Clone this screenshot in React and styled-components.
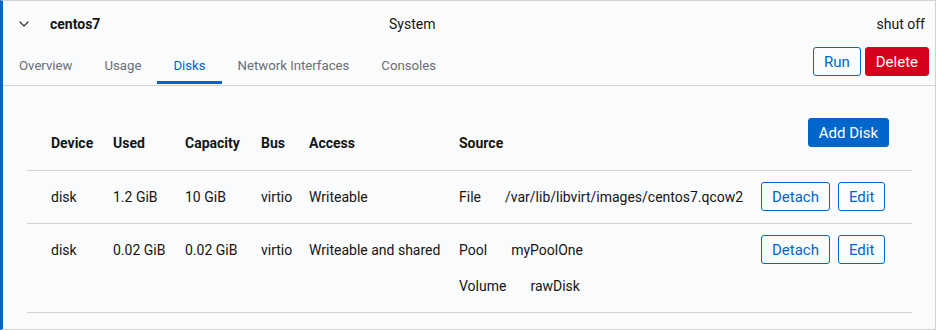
import React from 'react';
import styled, { createGlobalStyle } from 'styled-components';

const GlobalStyle = createGlobalStyle`
  html, body { margin: 0; padding: 0; background: #ffffff; }
  body {
    font-family: Roboto, "Liberation Sans", sans-serif;
    font-size: 14px;
    line-height: 20px;
    color: #151515;
  }
  * { box-sizing: border-box; }
`;

const Card = styled.section`
  width: 936px;
  background: #fafbfc;
  border: 1px solid #d2d2d2;
  border-left: 3px solid #0066cc;
  display: flex;
  flex-direction: column;
`;

const HeaderRow = styled.div`
  display: grid;
  grid-template-columns: 47px 339px 1fr auto;
  align-items: center;
  height: 45px;
  padding-right: 10px;
`;

const Toggle = styled.button`
  border: 0;
  background: transparent;
  padding: 0 0 0 16px;
  height: 45px;
  display: flex;
  align-items: center;
  color: #151515;
  cursor: pointer;
`;

const VmName = styled.span`
  font-weight: 700;
`;

const Meta = styled.span`
  color: #151515;
`;

const TabsRow = styled.div`
  display: flex;
  justify-content: space-between;
  align-items: flex-start;
  padding: 0 6px 1px 0;
  border-bottom: 1px solid #d2d2d2;
`;

const TabList = styled.nav`
  display: flex;
`;

const Tab = styled.button`
  font-family: inherit;
  font-size: 13.2px;
  background: transparent;
  border: 0;
  border-bottom: 3px solid ${p => (p.$active ? '#0066cc' : 'transparent')};
  color: ${p => (p.$active ? '#0066cc' : '#6a6e73')};
  padding: 10px 16px 5px;
  line-height: 20px;
  cursor: pointer;
`;

const ButtonGroup = styled.div`
  display: flex;
  gap: ${p => p.$gap || 8}px;
  margin-top: ${p => p.$top || 0}px;
`;

const Button = styled.button`
  font-family: inherit;
  font-size: 15px;
  height: 29px;
  padding: 0 10px;
  border-radius: 3px;
  display: inline-flex;
  align-items: center;
  cursor: pointer;
  border: 1px solid
    ${p => (p.$variant === 'danger' ? '#d6001c' : '#0066cc')};
  background: ${p =>
    p.$variant === 'primary' ? '#0066cc' : p.$variant === 'danger' ? '#d6001c' : 'transparent'};
  color: ${p => (p.$variant === 'secondary' ? '#0066cc' : '#ffffff')};
`;

const Body = styled.div`
  padding: 16px 23px 16px 24px;
`;

const cols = '86px 72px 76px 48px 150px 302px 1fr';

const HeadRow = styled.div`
  display: grid;
  grid-template-columns: ${cols};
  height: 69px;
  border-bottom: 1px solid #d2d2d2;
`;

const Th = styled.div`
  font-weight: 700;
  align-self: end;
  padding: 0 0 17px ${p => (p.$first ? 24 : 0)}px;
`;

const ThAction = styled.div`
  align-self: start;
  justify-self: end;
  padding: 16px 23px 0 0;
`;

const Row = styled.div`
  display: grid;
  grid-template-columns: ${cols};
  align-items: start;
  border-bottom: 1px solid #d2d2d2;
`;

const Td = styled.div`
  padding: 16px 0 16px ${p => (p.$first ? 24 : 0)}px;
`;

const TdAction = styled.div`
  padding-top: 11px;
`;

const SourceList = styled.div`
  display: flex;
  flex-direction: column;
  gap: 16px;
`;

const SourceItem = styled.div`
  display: flex;
  gap: 24px;
`;

const Chevron = () => (
  <svg width="10" height="6" viewBox="0 0 10 6" fill="none">
    <path d="M1 1 L5 5 L9 1" stroke="#3c3f42" strokeWidth="1.4" strokeLinecap="round" strokeLinejoin="round" />
  </svg>
);

const disks = [
  {
    device: 'disk',
    used: '1.2 GiB',
    capacity: '10 GiB',
    bus: 'virtio',
    access: 'Writeable',
    source: [['File', '/var/lib/libvirt/images/centos7.qcow2']],
  },
  {
    device: 'disk',
    used: '0.02 GiB',
    capacity: '0.02 GiB',
    bus: 'virtio',
    access: 'Writeable and shared',
    source: [
      ['Pool', 'myPoolOne'],
      ['Volume', 'rawDisk'],
    ],
  },
];

const tabs = ['Overview', 'Usage', 'Disks', 'Network Interfaces', 'Consoles'];

export default function App() {
  return (
    <>
      <GlobalStyle />
      <Card>
        <HeaderRow>
          <Toggle aria-label="collapse">
            <Chevron />
          </Toggle>
          <VmName>centos7</VmName>
          <Meta>System</Meta>
          <Meta>shut off</Meta>
        </HeaderRow>
        <TabsRow>
          <TabList>
            {tabs.map(t => (
              <Tab key={t} $active={t === 'Disks'}>
                {t}
              </Tab>
            ))}
          </TabList>
          <ButtonGroup $gap={4} $top={1}>
            <Button $variant="secondary">Run</Button>
            <Button $variant="danger">Delete</Button>
          </ButtonGroup>
        </TabsRow>
        <Body>
          <HeadRow>
            <Th $first>Device</Th>
            <Th>Used</Th>
            <Th>Capacity</Th>
            <Th>Bus</Th>
            <Th>Access</Th>
            <Th>Source</Th>
            <ThAction>
              <Button $variant="primary">Add Disk</Button>
            </ThAction>
          </HeadRow>
          {disks.map((d, i) => (
            <Row key={i}>
              <Td $first>{d.device}</Td>
              <Td>{d.used}</Td>
              <Td>{d.capacity}</Td>
              <Td>{d.bus}</Td>
              <Td>{d.access}</Td>
              <Td>
                <SourceList>
                  {d.source.map(([k, v]) => (
                    <SourceItem key={k}>
                      <span>{k}</span>
                      <span>{v}</span>
                    </SourceItem>
                  ))}
                </SourceList>
              </Td>
              <TdAction>
                <ButtonGroup>
                  <Button $variant="secondary">Detach</Button>
                  <Button $variant="secondary">Edit</Button>
                </ButtonGroup>
              </TdAction>
            </Row>
          ))}
        </Body>
      </Card>
    </>
  );
}
